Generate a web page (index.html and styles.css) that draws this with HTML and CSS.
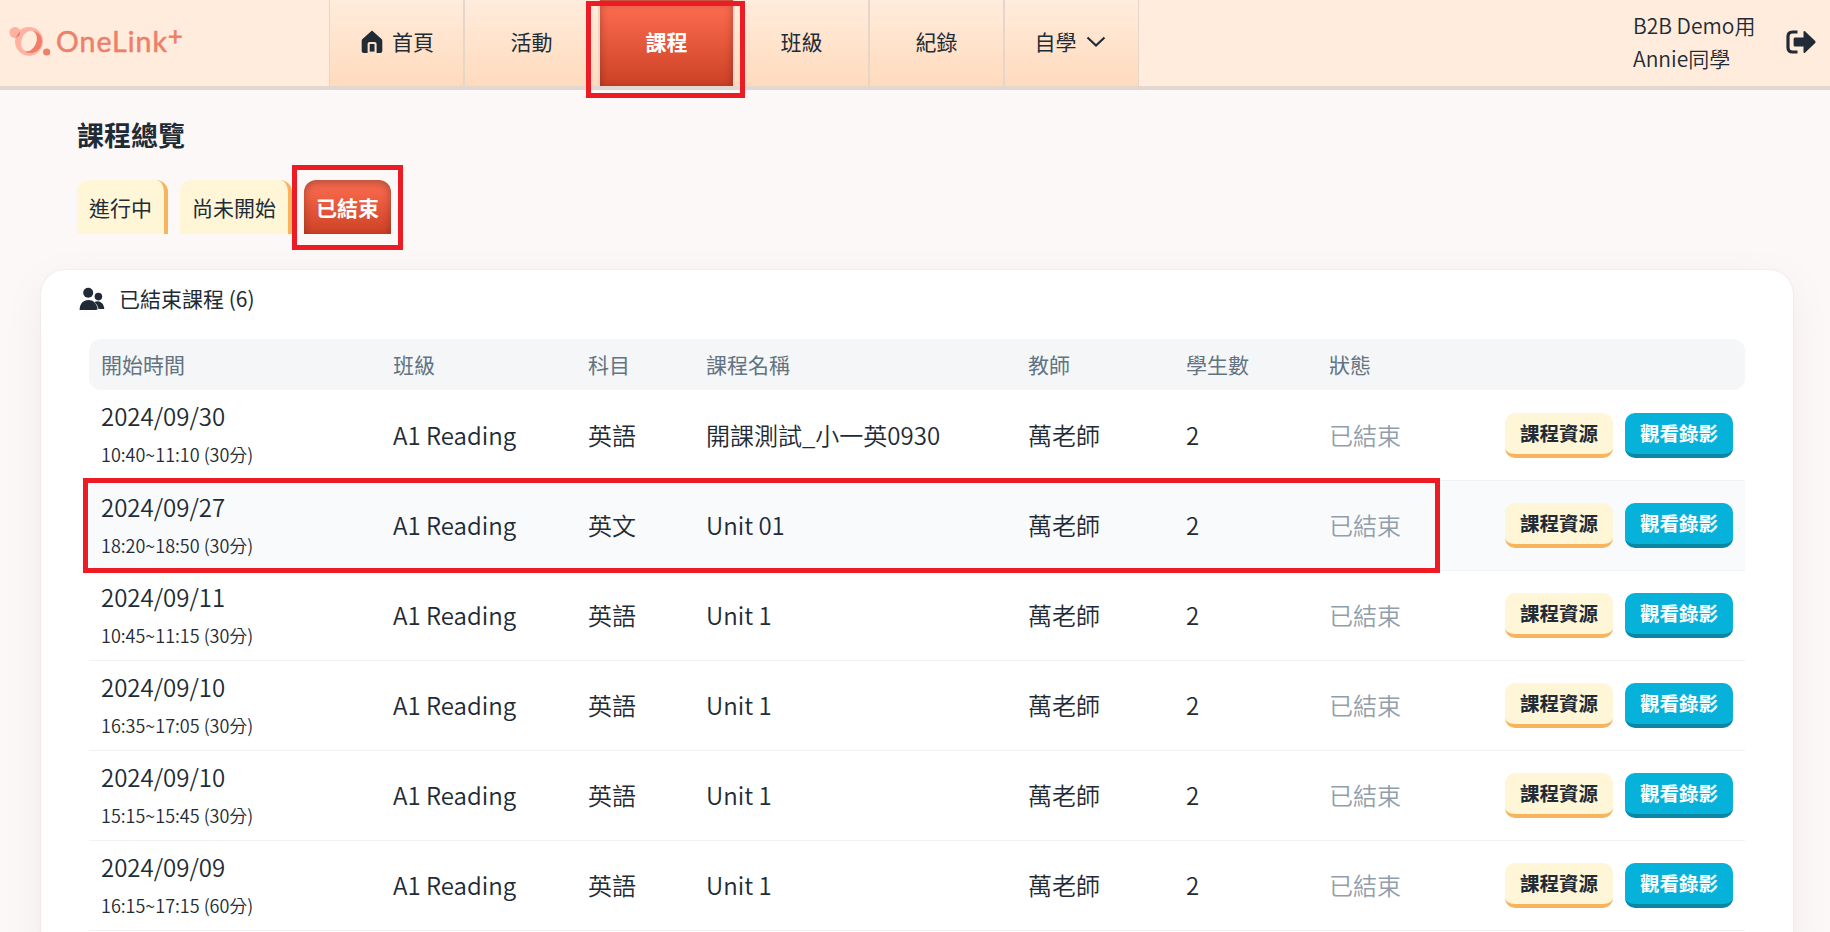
FILE: index.html
```
<!DOCTYPE html>
<html lang="zh-TW">
<head>
    <meta charset="UTF-8">
    <meta name="viewport" content="width=device-width, initial-scale=1.0">
    <title>課程總覽</title>
    <link rel="stylesheet" href="styles.css">
</head>
<body>
    <header class="header">
        <a class="logo" href="#">
            <svg class="logo-mark" width="44" height="32" viewBox="0 0 44 32">
                <circle cx="6" cy="7.5" r="5.5" fill="#ffb1a3"/>
                <ellipse cx="20" cy="16.3" rx="14" ry="14.4" fill="#ffb1a3"/>
                <path d="M24.5 6 C31.5 7.5 34.5 13.5 32.4 20.3 C30 27 22.5 30 15.8 26.8 C25 26 30 15 24.5 6Z" fill="#ee7f69"/>
                <ellipse cx="20" cy="16" rx="7.4" ry="10.6" transform="rotate(22 20 16)" fill="#ffecdc"/>
                <path d="M6.8 12.9 A14 14 0 0 1 11 6.5 A5.5 5.5 0 0 1 6.8 12.9Z" fill="#ee7f69"/>
                <circle cx="37.7" cy="27" r="3.6" fill="#ee7f69"/>
            </svg>
            <span class="logo-text">OneLink</span><span class="logo-plus">+</span>
        </a>
        <nav class="nav">
            <a class="nav-item" href="#">
                <svg class="home-icon" width="22" height="24" viewBox="0 0 22 24">
                    <path d="M11 .5 L20.5 9 Q21.3 9.7 21.3 11 V21 Q21.3 23 19.3 23 H15.6 V14 Q15.6 12 13.6 12 H8.6 Q6.6 12 6.6 14 V23 H2.8 Q.7 23 .7 21 V11 Q.7 9.7 1.5 9Z" fill="#212b36"/>
                    <rect x="8.7" y="14" width="4.8" height="7.6" fill="#212b36"/>
                </svg>
                首頁
            </a>
            <a class="nav-item" href="#">活動</a>
            <a class="nav-item active marked" href="#">課程</a>
            <a class="nav-item" href="#">班級</a>
            <a class="nav-item" href="#">紀錄</a>
            <a class="nav-item" href="#">
                自學
                <svg class="arrow-icon" width="20" height="12" viewBox="0 0 20 12">
                    <path d="M1.5 1.5 L10 9.5 L18.5 1.5" fill="none" stroke="#212b36" stroke-width="2.2"/>
                </svg>
            </a>
        </nav>
        <div class="user">
            <div class="user-name">B2B Demo用<br>Annie同學</div>
            <svg class="logout-icon" width="30" height="24" viewBox="0 0 30 24">
                <path d="M11.5 2 H6.5 Q2 2 2 6.5 V17.5 Q2 22 6.5 22 H11.5" fill="none" stroke="#212b36" stroke-width="3.2"/>
                <path d="M9 7.5 H17.5 V2 Q17.5 .2 19 1.3 L29.2 11 Q30 12 29.2 13 L19 22.7 Q17.5 23.8 17.5 22 V16.5 H9 Q7.6 16.5 7.6 15 V9 Q7.6 7.5 9 7.5Z" fill="#212b36"/>
            </svg>
        </div>
    </header>

    <main>
        <h1>課程總覽</h1>
        <div class="tabs">
            <a class="tab" href="#">進行中</a>
            <a class="tab" href="#">尚未開始</a>
            <a class="tab active marked" href="#">已結束</a>
        </div>

        <section class="card">
            <h2>
                <svg width="26" height="24" viewBox="0 0 26 24">
                    <circle cx="9.2" cy="5.8" r="5" fill="#212b36"/>
                    <circle cx="19.4" cy="9.6" r="3.8" fill="#212b36"/>
                    <path d="M.6 23 C.6 16.5 4.5 13 9.3 13 C14.5 13 17 16.5 18.4 20.5 Q19 23 17 23Z" fill="#212b36"/>
                    <path d="M15.3 15.2 C19.5 12.7 25 15.5 25.3 22 H19.6 C19.2 19.5 17.5 16.7 15.3 15.2Z" fill="#212b36"/>
                </svg>
                <span>已結束課程 (6)</span>
            </h2>
            <div class="table">
                <div class="row table-head">
                    <div>開始時間</div>
                    <div>班級</div>
                    <div>科目</div>
                    <div>課程名稱</div>
                    <div>教師</div>
                    <div>學生數</div>
                    <div>狀態</div>
                    <div></div>
                </div>
                <div class="row">
                    <div class="time">2024/09/30<small>10:40~11:10 (30分)</small></div>
                    <div>A1 Reading</div>
                    <div>英語</div>
                    <div>開課測試_小一英0930</div>
                    <div>萬老師</div>
                    <div>2</div>
                    <div class="status">已結束</div>
                    <div class="actions"><button class="btn">課程資源</button><button class="btn btn-video">觀看錄影</button></div>
                </div>
                <div class="row highlight">
                    <div class="time">2024/09/27<small>18:20~18:50 (30分)</small></div>
                    <div>A1 Reading</div>
                    <div>英文</div>
                    <div>Unit 01</div>
                    <div>萬老師</div>
                    <div>2</div>
                    <div class="status">已結束</div>
                    <div class="actions"><button class="btn">課程資源</button><button class="btn btn-video">觀看錄影</button></div>
                </div>
                <div class="row">
                    <div class="time">2024/09/11<small>10:45~11:15 (30分)</small></div>
                    <div>A1 Reading</div>
                    <div>英語</div>
                    <div>Unit 1</div>
                    <div>萬老師</div>
                    <div>2</div>
                    <div class="status">已結束</div>
                    <div class="actions"><button class="btn">課程資源</button><button class="btn btn-video">觀看錄影</button></div>
                </div>
                <div class="row">
                    <div class="time">2024/09/10<small>16:35~17:05 (30分)</small></div>
                    <div>A1 Reading</div>
                    <div>英語</div>
                    <div>Unit 1</div>
                    <div>萬老師</div>
                    <div>2</div>
                    <div class="status">已結束</div>
                    <div class="actions"><button class="btn">課程資源</button><button class="btn btn-video">觀看錄影</button></div>
                </div>
                <div class="row">
                    <div class="time">2024/09/10<small>15:15~15:45 (30分)</small></div>
                    <div>A1 Reading</div>
                    <div>英語</div>
                    <div>Unit 1</div>
                    <div>萬老師</div>
                    <div>2</div>
                    <div class="status">已結束</div>
                    <div class="actions"><button class="btn">課程資源</button><button class="btn btn-video">觀看錄影</button></div>
                </div>
                <div class="row">
                    <div class="time">2024/09/09<small>16:15~17:15 (60分)</small></div>
                    <div>A1 Reading</div>
                    <div>英語</div>
                    <div>Unit 1</div>
                    <div>萬老師</div>
                    <div>2</div>
                    <div class="status">已結束</div>
                    <div class="actions"><button class="btn">課程資源</button><button class="btn btn-video">觀看錄影</button></div>
                </div>
            </div>
        </section>
    </main>
</body>
</html>
```
FILE: styles.css
```
*,
*::after {
    box-sizing: border-box;
}
body {
    margin: 0;
    height: 932px;
    overflow: hidden;
    background-color: #fcf8f8;
    color: #212b36;
    font-family: "Noto Sans CJK TC", sans-serif;
    font-size: 21px;
}
a {
    color: inherit;
    text-decoration: none;
}
.header {
    display: flex;
    height: 90px;
    background-color: #ffecdc;
    border-bottom: 4px solid #e3d8d1;
}
.logo {
    display: flex;
    align-items: center;
    width: 329px;
    padding: 0 0 4px 9px;
    color: #ee7f69;
    font-family: Lato, sans-serif;
}
.logo-mark {
    margin-top: -1px;
}
.logo-text {
    margin-left: 3px;
    font-size: 28.5px;
    letter-spacing: 1px;
    -webkit-text-stroke: 0.5px #ee7f69;
}
.logo-plus {
    margin-top: -12px;
    font-size: 25px;
    -webkit-text-stroke: 0.8px #ee7f69;
}
.nav {
    display: flex;
}
.nav-item {
    display: flex;
    align-items: center;
    justify-content: center;
    width: 135px;
    padding-bottom: 4px;
    border: 1px solid #e6d6c9;
    border-width: 0 1px;
    background: linear-gradient(#ffecdc, #ffdbbd);
}
.home-icon {
    margin: 1px 9px 0 2px;
}
.arrow-icon {
    margin: 1px 3px 0 9px;
}
.active {
    background: linear-gradient(#ff6f52, #cc4125);
    box-shadow: inset 0 3px 8px rgba(0, 0, 0, 0.3);
    color: #fff;
    font-weight: bold;
}
/* red frames around the selected items */
.marked,
.highlight {
    position: relative;
}
.marked::after,
.highlight::after {
    content: "";
    position: absolute;
    border: 5px solid #ed1c24;
}
.nav-item.marked::after {
    top: 1px;
    left: -14px;
    width: 159px;
    height: 97px;
}
.user {
    display: flex;
    align-items: center;
    margin-left: auto;
    padding: 0 14px 2px 0;
    font-weight: 350;
    line-height: 33px;
}
.user-name {
    width: 153px;
}
main {
    padding: 0 37px 0 41px;
}
h1 {
    margin: 25px 0 25px 36px;
    font-size: 27px;
    line-height: 40px;
}
.tabs {
    display: flex;
    gap: 12px;
    margin-left: 36px;
}
.tab {
    height: 54px;
    padding: 0 12px;
    border-right: 4px solid #f8b45c;
    border-radius: 12px 12px 0 0;
    background-color: #fff5d7;
    line-height: 54px;
}
.tab.active {
    border-right: none;
}
.tab.marked::after {
    top: -15px;
    left: -12px;
    width: 111px;
    height: 85px;
}
.card {
    height: 700px;
    margin-top: 36px;
    padding: 13px 48px;
    border-radius: 24px;
    background-color: #fff;
    box-shadow: 0 0 2px rgba(145, 130, 120, 0.2), 0 12px 40px -4px rgba(145, 120, 110, 0.12);
}
h2 {
    display: flex;
    align-items: center;
    gap: 14px;
    height: 31px;
    margin: 0 0 25px -10px;
    font-size: 21px;
    font-weight: normal;
}
h2 span {
    padding-bottom: 2px;
}
.row {
    display: grid;
    grid-template-columns: 292px 195px 118px 322px 158px 143px 1fr auto;
    align-items: center;
    height: 90px;
    padding: 0 12px;
    border-bottom: 1px solid #f0f2f4;
    font-size: 24px;
    font-weight: 350;
}
.row > div {
    padding-bottom: 2px;
}
.row > .actions {
    padding-bottom: 0;
}
.table-head {
    height: 51px;
    border: none;
    border-radius: 12px;
    background-color: #f4f6f8;
    color: #637381;
    font-size: 21px;
    font-weight: normal;
}
.table-head > div {
    padding-bottom: 1px;
}
.table-head + .row {
    height: 91px;
}
.highlight {
    background-color: #f9fafc;
}
.highlight::after {
    top: -3px;
    left: -6px;
    width: 1357px;
    height: 95px;
}
.time {
    line-height: 36px;
}
.time small {
    display: block;
    margin-top: 4px;
    font-size: 18px;
    line-height: 32px;
}
.status {
    color: #919eab;
}
.actions {
    display: flex;
    gap: 12px;
}
.btn {
    width: 108px;
    height: 45px;
    padding: 0 0 2px;
    border: none;
    border-bottom: 4px solid #f8b45c;
    border-radius: 10px;
    background-color: #fff5d7;
    color: #212b36;
    font-family: inherit;
    font-size: 19.5px;
    font-weight: bold;
}
.btn-video {
    border-color: #0b87a4;
    background-color: #07b2da;
    color: #fff;
}
```
